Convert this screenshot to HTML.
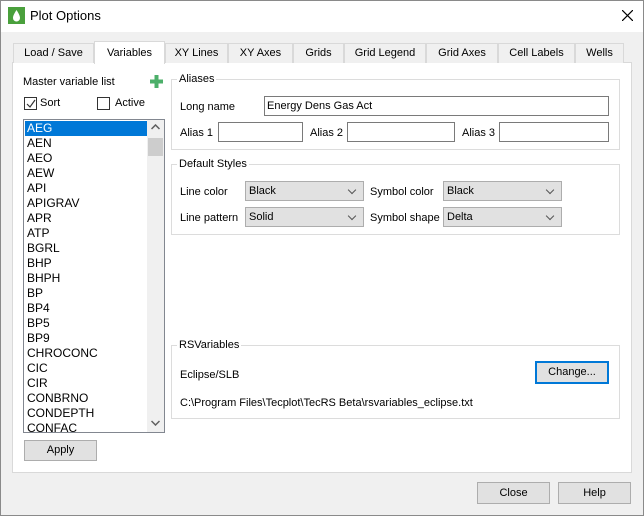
<!DOCTYPE html>
<html><head><style>
*{box-sizing:border-box;margin:0;padding:0}
body{width:644px;height:516px;background:#f0f0f0;font:11px "Liberation Sans",sans-serif;color:#000;position:relative;overflow:hidden}
.a{position:absolute;white-space:nowrap}
.win{left:0;top:0;width:644px;height:516px;border:1px solid #8a8a8a}
.title{left:1px;top:1px;width:642px;height:31px;background:#fff}
.tab{position:absolute;top:43px;height:20px;border:1px solid #d9d9d9;border-bottom:none;background:#f0f0f0;text-align:center;line-height:19px}
.panel{left:12px;top:62px;width:620px;height:411px;background:#fff;border:1px solid #d9d9d9}
.grp{position:absolute;border:1px solid #dcdcdc}
.gl{position:absolute;background:#fff;padding:0 2px;top:-8px;left:5px;line-height:14px}
.inp{position:absolute;border:1px solid #7a7a7a;background:#fff;height:20px;line-height:18px;padding-left:2px}
.cb{position:absolute;border:1px solid #adadad;background:#e1e1e1;height:20px;line-height:18px;padding-left:3px}
.cb:after{content:"";position:absolute;right:8px;top:5px;width:5px;height:5px;border-right:1px solid #555;border-bottom:1px solid #555;transform:rotate(45deg)}
.btn{position:absolute;border:1px solid #adadad;background:#e1e1e1;text-align:center}
.chk{position:absolute;width:13px;height:13px;border:1px solid #333;background:#fff}
.li{position:absolute;left:2px;height:15px;line-height:15px;padding-left:1px;font-size:12px}
</style></head><body>
<div class="a win"></div>
<div class="a title"></div>
<svg class="a" style="left:8px;top:7px" width="17" height="17"><rect width="17" height="17" fill="#4aa03c"/><path d="M8.5 3 C6 7 5 9 5 11 a3.5 3.5 0 0 0 7 0 C12 9 11 7 8.5 3Z" fill="#fff"/></svg>
<div class="a" style="left:30px;top:8px;font-size:13px">Plot Options</div>
<svg class="a" style="left:622px;top:10px" width="11" height="11"><path d="M0 0L11 11M11 0L0 11" stroke="#000" stroke-width="1.2"/></svg>
<div class="a panel"></div>
<div class="tab" style="left:13px;width:81px">Load / Save</div>
<div class="tab" style="left:165px;width:63px">XY Lines</div>
<div class="tab" style="left:228px;width:65px">XY Axes</div>
<div class="tab" style="left:293px;width:51px">Grids</div>
<div class="tab" style="left:344px;width:82px">Grid Legend</div>
<div class="tab" style="left:426px;width:72px">Grid Axes</div>
<div class="tab" style="left:498px;width:77px">Cell Labels</div>
<div class="tab" style="left:575px;width:49px">Wells</div>
<div class="tab" style="left:94px;width:71px;top:41px;height:23px;background:#fff;line-height:22px">Variables</div>

<div class="a" style="left:23px;top:76px">Master variable list</div>
<svg class="a" style="left:150px;top:75px" width="13" height="13"><path d="M4.5 0h4v4.5h4.5v4h-4.5v4.5h-4v-4.5h-4.5v-4h4.5z" fill="#4caf6a"/></svg>
<div class="chk" style="left:24px;top:97px"></div>
<svg class="a" style="left:26px;top:99px" width="10" height="10"><path d="M1 5l3 3 5-7" stroke="#333" fill="none" stroke-width="1.2"/></svg>
<div class="a" style="left:40px;top:97px">Sort</div>
<div class="chk" style="left:97px;top:97px"></div>
<div class="a" style="left:115px;top:97px">Active</div>

<div class="a" style="left:23px;top:119px;width:142px;height:314px;border:1px solid #828790;background:#fff;overflow:hidden">
<div style="position:absolute;left:1px;top:1px;width:122px;height:15px;background:#0078d7"></div>
<div class="li" style="top:1px;color:#fff">AEG</div>
<div class="li" style="top:16px">AEN</div><div class="li" style="top:31px">AEO</div><div class="li" style="top:46px">AEW</div><div class="li" style="top:61px">API</div><div class="li" style="top:76px">APIGRAV</div><div class="li" style="top:91px">APR</div><div class="li" style="top:106px">ATP</div><div class="li" style="top:121px">BGRL</div><div class="li" style="top:136px">BHP</div><div class="li" style="top:151px">BHPH</div><div class="li" style="top:166px">BP</div><div class="li" style="top:181px">BP4</div><div class="li" style="top:196px">BP5</div><div class="li" style="top:211px">BP9</div><div class="li" style="top:226px">CHROCONC</div><div class="li" style="top:241px">CIC</div><div class="li" style="top:256px">CIR</div><div class="li" style="top:271px">CONBRNO</div><div class="li" style="top:286px">CONDEPTH</div><div class="li" style="top:301px">CONFAC</div>
<div style="position:absolute;left:123px;top:0;width:17px;height:312px;background:#f0f0f0"></div>
<div style="position:absolute;left:124px;top:18px;width:15px;height:18px;background:#cdcdcd"></div>
<svg style="position:absolute;left:127px;top:4px" width="9" height="6"><path d="M0.5 5L4.5 1 8.5 5" stroke="#606060" fill="none" stroke-width="1.5"/></svg>
<svg style="position:absolute;left:127px;top:300px" width="9" height="6"><path d="M0.5 1L4.5 5 8.5 1" stroke="#606060" fill="none" stroke-width="1.5"/></svg>
</div>
<div class="btn" style="left:24px;top:440px;width:73px;height:21px;line-height:19px">Apply</div>

<div class="grp" style="left:171px;top:79px;width:449px;height:71px"><div class="gl">Aliases</div></div>
<div class="a" style="left:180px;top:101px">Long name</div>
<div class="inp" style="left:264px;top:96px;width:345px">Energy Dens Gas Act</div>
<div class="a" style="left:180px;top:127px">Alias 1</div>
<div class="inp" style="left:218px;top:122px;width:85px"></div>
<div class="a" style="left:310px;top:127px">Alias 2</div>
<div class="inp" style="left:347px;top:122px;width:108px"></div>
<div class="a" style="left:462px;top:127px">Alias 3</div>
<div class="inp" style="left:499px;top:122px;width:110px"></div>

<div class="grp" style="left:171px;top:164px;width:449px;height:71px"><div class="gl">Default Styles</div></div>
<div class="a" style="left:180px;top:186px">Line color</div>
<div class="cb" style="left:245px;top:181px;width:119px">Black</div>
<div class="a" style="left:370px;top:186px">Symbol color</div>
<div class="cb" style="left:443px;top:181px;width:119px">Black</div>
<div class="a" style="left:180px;top:212px">Line pattern</div>
<div class="cb" style="left:245px;top:207px;width:119px">Solid</div>
<div class="a" style="left:370px;top:212px">Symbol shape</div>
<div class="cb" style="left:443px;top:207px;width:119px">Delta</div>

<div class="grp" style="left:171px;top:345px;width:449px;height:74px"><div class="gl">RSVariables</div></div>
<div class="a" style="left:180px;top:369px">Eclipse/SLB</div>
<div class="btn" style="left:535px;top:361px;width:74px;height:23px;border:2px solid #0078d7;line-height:19px">Change...</div>
<div class="a" style="left:180px;top:397px">C:\Program Files\Tecplot\TecRS Beta\rsvariables_eclipse.txt</div>

<div class="btn" style="left:477px;top:482px;width:73px;height:22px;line-height:20px">Close</div>
<div class="btn" style="left:558px;top:482px;width:73px;height:22px;line-height:20px">Help</div>
</body></html>
